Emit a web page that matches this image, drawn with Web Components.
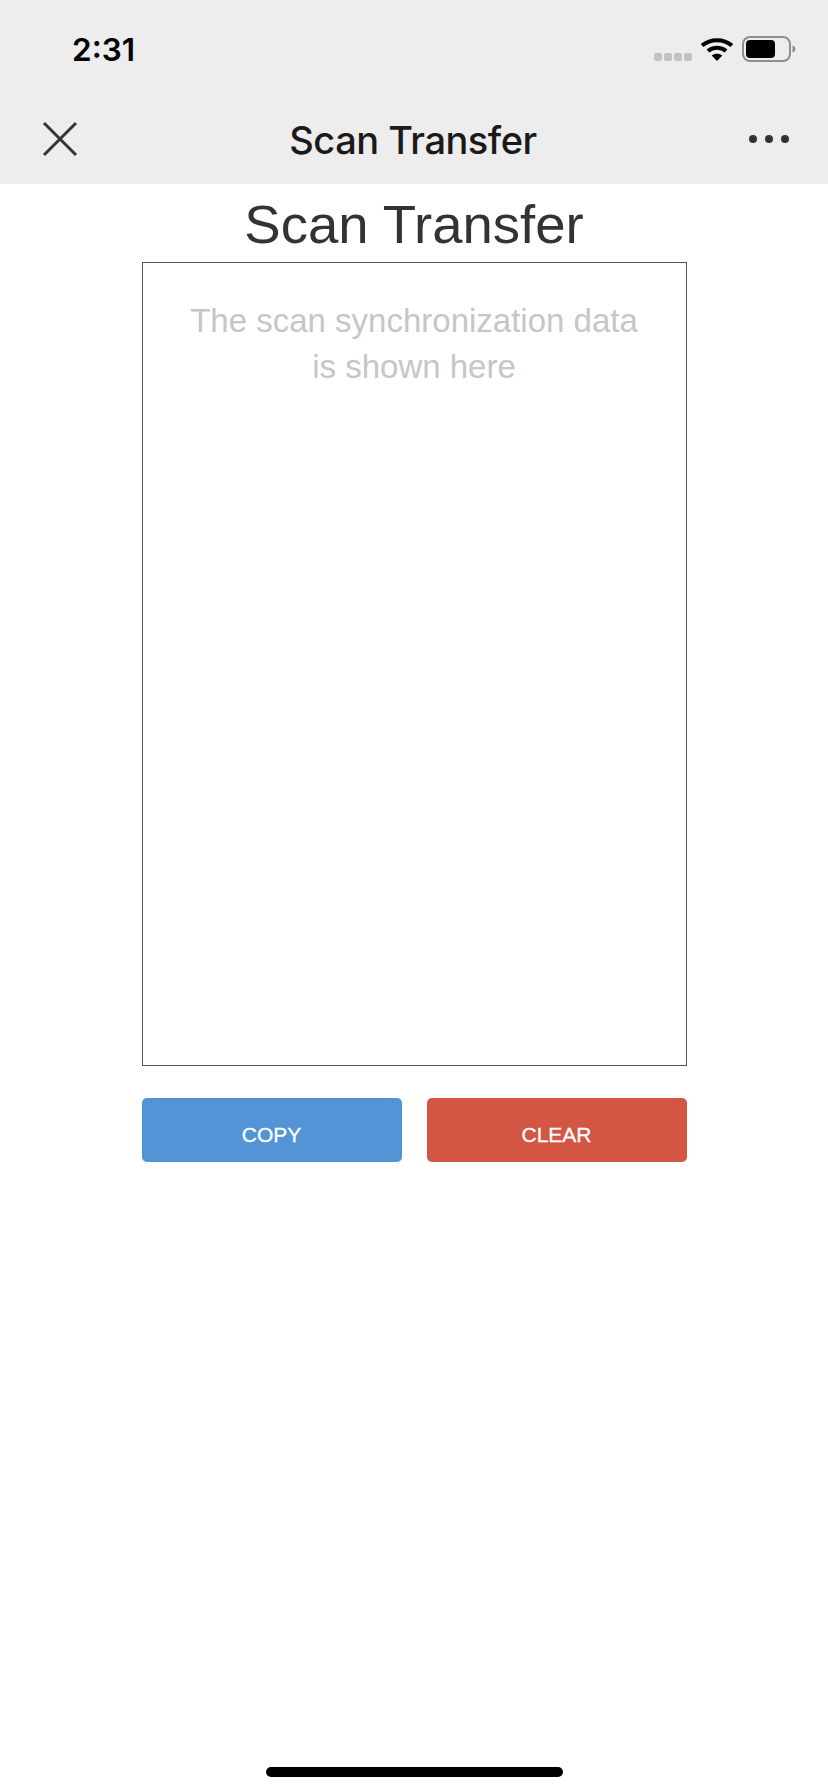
<!DOCTYPE html>
<html lang="en">
<head>
<meta charset="utf-8">
<title>Scan Transfer</title>
<style>
html,body{margin:0;padding:0;background:#fff}
</style>
</head>
<body>
<scan-page></scan-page>
<script>
function def(name, html){
  customElements.define(name, class extends HTMLElement{
    constructor(){super();this.attachShadow({mode:'open'}).innerHTML=html;}
  });
}
def('status-bar',`<style>
:host{display:flex;box-sizing:border-box;height:88px;padding:32px 32px 0 72px;justify-content:space-between;align-items:flex-start;background:#ededed}
.time{font:600 31.500px/36px Inter,"Liberation Sans",sans-serif;color:#000}
.icons{display:flex;align-items:center;gap:8px;height:34px}
svg{display:block}
</style>
<span class="time">2:31</span>
<div class="icons">
<svg width="38" height="10" viewBox="0 0 38 10" style="margin-top:16px"><g fill="#c2c2c2"><rect x="0" y="1" width="8" height="8" rx="2"/><rect x="10" y="1" width="8" height="8" rx="2"/><rect x="20" y="1" width="8" height="8" rx="2"/><rect x="30" y="1" width="8" height="8" rx="2"/></g></svg>
<svg width="34" height="26" viewBox="0 0 32 26" fill="none" preserveAspectRatio="none"><path d="M2 9.500C10 2.500 22 2.500 30 9.500" stroke="#000" stroke-width="4"/><path d="M7.500 15C12.500 10.800 19.500 10.800 24.500 15" stroke="#000" stroke-width="4"/><path d="M11 19.500 16 25l5-5.500C18 17 14 17 11 19.500Z" fill="#000"/></svg>
<svg width="54" height="26" viewBox="0 0 54 26" fill="none"><rect x="1" y="1" width="47" height="24" rx="7" stroke="#8e8e8e" stroke-width="2"/><rect x="4" y="4" width="29" height="18" rx="4" fill="#000"/><path d="M50.500 9.500c1.800.6 3 1.900 3 3.500s-1.200 2.900-3 3.500z" fill="#8e8e8e"/></svg>
</div>`);
def('nav-bar',`<style>
:host{display:grid;grid-template-columns:100px 1fr 102px;align-items:center;box-sizing:border-box;height:96px;padding-top:6px;background:#ededed}
h1{margin:0;padding-top:2px;font:500 38px/46px Inter,"Liberation Sans",sans-serif;color:#1a1a1a;text-align:center;letter-spacing:-.5px}
.close{padding-left:42px}
.more{display:flex;justify-content:flex-end;padding-right:38px}
svg{display:block}
</style>
<div class="close"><svg width="36" height="36" viewBox="0 0 36 36"><path d="M2 2 34 34M34 2 2 34" stroke="#333" stroke-width="3" fill="none"/></svg></div>
<h1><slot></slot></h1>
<div class="more"><svg width="42" height="10" viewBox="0 0 42 10"><g fill="#333"><circle cx="5" cy="5" r="4"/><circle cx="21" cy="5" r="4"/><circle cx="37" cy="5" r="4"/></g></svg></div>`);
def('scan-panel',`<style>
:host{display:block;box-sizing:border-box;width:545px;height:804px;border:1.500px solid #555;padding:35px 40px;background:#fff;text-align:center;font:33px/46px "Liberation Sans",Arial,sans-serif;color:#c6c6c6}
</style><slot></slot>`);
def('action-button',`<style>
:host{display:flex;flex:1;align-items:center;justify-content:center;box-sizing:border-box;height:64px;padding-top:10px;border-radius:5px;color:#fff;font:21px/26px "Liberation Sans",Arial,sans-serif;background:var(--bg);-webkit-text-stroke:.3px #fff}
</style><slot></slot>`);
def('home-indicator',`<style>
:host{display:block;width:297px;height:10px;border-radius:5px;background:#000}
</style>`);
def('scan-page',`<style>
:host{display:flex;flex-direction:column;height:1792px;background:#fff;overflow:hidden}
main{display:flex;flex-direction:column;align-items:center;flex:1}
h2{margin:0;height:78px;font:400 54.500px/82px "Liberation Sans",Arial,sans-serif;color:#333;text-align:center}
.actions{display:flex;gap:25px;width:545px;margin-top:32px}
home-indicator{margin:auto 0 15.500px}
</style>
<status-bar></status-bar>
<nav-bar>Scan Transfer</nav-bar>
<main>
<h2>Scan Transfer</h2>
<scan-panel>The scan synchronization data is shown here</scan-panel>
<div class="actions">
<action-button style="--bg:#5294d6">COPY</action-button>
<action-button style="--bg:#d35644">CLEAR</action-button>
</div>
<home-indicator></home-indicator>
</main>`);
</script>
</body>
</html>
